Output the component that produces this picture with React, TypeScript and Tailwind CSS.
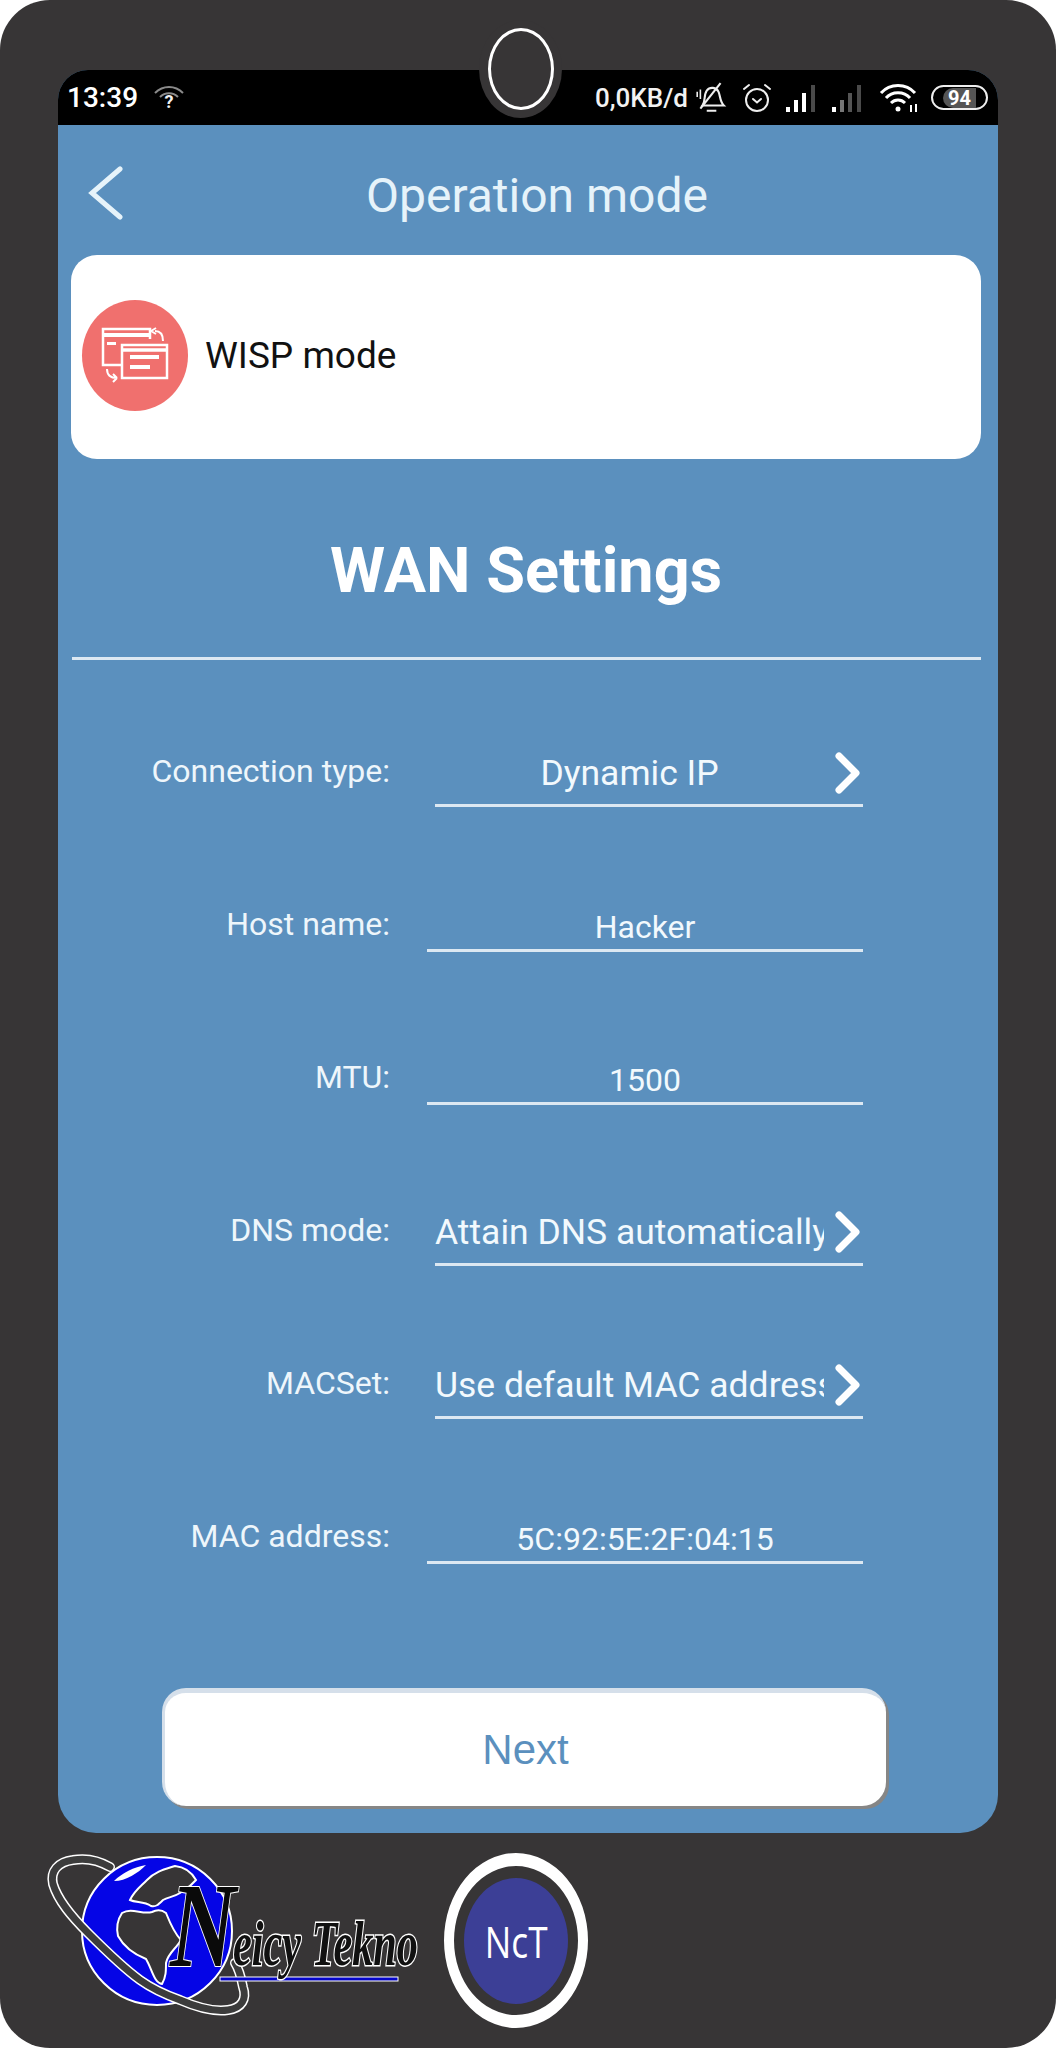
const rows = [
  { label: "Connection type:", value: "Dynamic IP", select: true },
  { label: "Host name:", value: "Hacker", select: false },
  { label: "MTU:", value: "1500", select: false },
  { label: "DNS mode:", value: "Attain DNS automatically", select: true },
  { label: "MACSet:", value: "Use default MAC address", select: true },
  { label: "MAC address:", value: "5C:92:5E:2F:04:15", select: false },
];

function WifiQuestion() {
  return (
    <svg width="32" height="26" viewBox="0 0 32 26" fill="none" className="ml-[15px]">
      <path d="M2 8 C10 0 22 0 30 8" stroke="#8a8a8a" strokeWidth="2" />
      <path d="M7 12 C12 7 20 7 25 12" stroke="#8a8a8a" strokeWidth="2" />
      <text x="16" y="23" textAnchor="middle" fontSize="18" fontWeight="700" fontFamily="Roboto, sans-serif" fill="#f2f2f2">?</text>
    </svg>
  );
}

function BellMuted() {
  return (
    <svg width="34" height="34" viewBox="0 0 32 32" fill="none" stroke="#eeeeee" strokeWidth="2">
      <path d="M8 23 C11 19 9 13 12 9 C15 5 21 6 23 10 C25 14 24 19 28 23 Z" />
      <path d="M12 28 H21" />
      <path d="M6 26 L25 2" />
      <path d="M3 10 V15 M6 8 V17" strokeWidth="1.5" />
    </svg>
  );
}

function Alarm() {
  return (
    <svg width="32" height="32" viewBox="0 0 32 32" fill="none" stroke="#eeeeee" strokeWidth="2" strokeLinecap="round">
      <circle cx="16" cy="18" r="11" />
      <path d="M12 17 L16 20.5 L20 17" />
      <path d="M3 7 L8 3 M29 7 L24 3" />
    </svg>
  );
}

function Signal({ dim }: { dim: boolean }) {
  const bars = [
    { x: 0, h: 5, c: "#ffffff" },
    { x: 8, h: 12, c: dim ? "#777777" : "#ffffff" },
    { x: 16, h: 19, c: dim ? "#555555" : "#ffffff" },
    { x: 25, h: 27, c: "#4a4a4a" },
  ];
  return (
    <svg width="36" height="28" viewBox="0 0 36 28">
      {bars.map((b) => (
        <rect key={b.x} x={b.x + 3} y={28 - b.h} width="4" height={b.h} fill={b.c} />
      ))}
    </svg>
  );
}

function WifiFull() {
  return (
    <svg width="40" height="30" viewBox="0 0 40 30" fill="none" stroke="#ffffff" strokeWidth="3">
      <path d="M2 10 C11 0 27 0 36 10" />
      <path d="M7 15 C13 8 25 8 31 15" />
      <path d="M12 20 C16 16 22 16 26 20" />
      <circle cx="19" cy="26" r="2.5" fill="#ffffff" stroke="none" />
      <path d="M32 22 V29 M37 21 V29" strokeWidth="2" />
    </svg>
  );
}

function WispIcon() {
  return (
    <svg width="68" height="56" viewBox="0 0 68 56" fill="none" stroke="#ffffff" strokeWidth="2.5">
      <path d="M40 38 H2 V2 H49 V12" fill="none" />
      <path d="M2 8 H49" strokeWidth="4" />
      <rect x="6" y="15" width="9" height="3" fill="#ffffff" stroke="none" />
      <rect x="21" y="18" width="45" height="33" fill="#f0706e" />
      <path d="M21 23 H66" strokeWidth="3.5" />
      <rect x="29" y="28" width="29" height="4" fill="#ffffff" stroke="none" />
      <rect x="29" y="38" width="20" height="4" fill="#ffffff" stroke="none" />
      <path d="M54 4 C60 4 62 8 62 14 M50 4 L55 1 M50 4 L55 7" strokeWidth="2" />
      <path d="M6 42 C6 48 10 51 16 51 M16 51 L12 47 M16 51 L12 55" strokeWidth="2" />
    </svg>
  );
}

function Chevron() {
  return (
    <svg width="26" height="42" viewBox="0 0 26 42" fill="none" stroke="#ffffff" strokeWidth="7" strokeLinecap="round" strokeLinejoin="round" className="shrink-0">
      <path d="M4 4 L21 21 L4 38" />
    </svg>
  );
}

function NeicyLogo() {
  const ring = "M110 1864 C98 1857 84 1855 73 1857 C58 1859 50 1868 53 1881 C58 1898 72 1914 88 1930 C106 1948 122 1964 140 1977 C154 1987 166 1992 180 1997 C196 2004 214 2009 228 2007 C242 2005 247 1996 243 1984 C241 1974 239 1966 235 1960";
  return (
    <svg width="390" height="170" viewBox="40 1850 390 170" fill="none" className="shrink-0 overflow-visible">
      {/* globe */}
      <ellipse cx="157" cy="1928" rx="75" ry="74" fill="#0505e6" stroke="#ffffff" strokeWidth="2" />
      {/* continents */}
      <path d="M122 1910 C132 1904 142 1912 152 1909 C158 1906 162 1907 166 1910 C170 1920 174 1930 181 1937 C176 1946 168 1950 166 1960 C166 1968 166 1974 162 1981 C154 1980 152 1966 146 1956 C136 1952 124 1944 118 1933 C116 1924 118 1916 122 1910 Z" fill="#373536" stroke="#ffffff" strokeWidth="2" />
      <path d="M130 1897 C134 1888 140 1884 147 1877 C156 1868 166 1866 175 1863 C186 1864 192 1870 196 1877 C190 1884 186 1886 180 1890 C174 1894 168 1894 163 1897 C158 1902 156 1904 151 1903 C144 1898 136 1900 130 1897 Z" fill="#373536" stroke="#ffffff" strokeWidth="2" />
      <path d="M114 1878 C122 1870 134 1864 146 1862 C138 1870 126 1878 114 1878 Z" fill="#ffffff" />
      {/* ring */}
      <path d={ring} stroke="#ffffff" strokeWidth="10" strokeLinecap="round" />
      <path d={ring} stroke="#3c3c3c" strokeWidth="7" strokeLinecap="round" />
      {/* wordmark */}
      <rect x="220" y="1974" width="178" height="4" fill="#0505c8" stroke="#ffffff" strokeWidth="1" />
      <text x="233" y="1962" textLength="185" lengthAdjust="spacingAndGlyphs" fontSize="64" fontStyle="italic" fontWeight="700" fontFamily="'Liberation Serif', serif" fill="#111111" stroke="#ffffff" strokeWidth="3" paintOrder="stroke">eicy Tekno</text>
      <text x="170" y="1963" textLength="66" lengthAdjust="spacingAndGlyphs" fontSize="120" fontStyle="italic" fontWeight="700" fontFamily="'Liberation Serif', serif" fill="#0a0a0a" stroke="#ffffff" strokeWidth="2" paintOrder="stroke">N</text>
    </svg>
  );
}

export default function App() {
  return (
    <div className="w-[1056px] h-[2048px] bg-white font-['Roboto',sans-serif]">
      <div className="relative h-full rounded-[50px] bg-[#373536] px-[58px] pt-[70px]">
        {/* camera notch */}
        <div className="absolute left-[479px] top-[20px] w-[83px] h-[98px] rounded-[50%] bg-[#373536] flex items-center justify-center">
          <div className="w-[66px] h-[82px] rounded-[50%] border-[3px] border-white" />
        </div>

        <div className="w-[940px] h-[1763px] rounded-t-[30px] rounded-b-[38px] overflow-hidden bg-[#5b90be] flex flex-col">
          <div className="h-[55px] bg-black flex items-center pl-[9px] pr-[10px] text-white shrink-0">
            <span className="text-[28px] leading-none font-medium">13:39</span>
            <WifiQuestion />
            <span className="ml-auto text-[26px] leading-none font-medium text-[#f2f2f2]">0,0KB/d</span>
            <div className="ml-[6px]"><BellMuted /></div>
            <div className="ml-[13px]"><Alarm /></div>
            <div className="ml-[10px]"><Signal dim={false} /></div>
            <div className="ml-[10px]"><Signal dim={true} /></div>
            <div className="ml-[14px]"><WifiFull /></div>
            <div className="ml-[12px] w-[57px] h-[25px] rounded-full border-2 border-[#eeeeee] flex items-center justify-center">
              <span className="text-[20px] leading-none font-bold text-white bg-[#555555] px-[5px] rounded-l-full">94</span>
            </div>
          </div>

          <div className="relative h-[130px] shrink-0 flex items-center justify-center pt-[12px]">
            <svg width="36" height="54" viewBox="0 0 36 54" fill="none" stroke="#e6f3fa" strokeWidth="5" strokeLinecap="round" className="absolute left-[30px] top-[41px]">
              <path d="M32 3 L4 27 L32 51" />
            </svg>
            <h1 className="text-[48px] leading-none text-[#e6f3fa] ml-[18px]">Operation mode</h1>
          </div>

          <div className="ml-[13px] mr-[17px] h-[204px] shrink-0 rounded-[26px] bg-white flex items-center pl-[11px] pb-[4px]">
            <div className="w-[106px] h-[111px] rounded-[50%] bg-[#f0706e] flex items-center justify-center">
              <WispIcon />
            </div>
            <span className="ml-[17px] text-[37px] leading-none text-[#111111]">WISP mode</span>
          </div>

          <div className="ml-[14px] mr-[17px] h-[201px] shrink-0 flex flex-col border-b-[3px] border-[#dce8f2]">
            <h2 className="mt-[84px] text-center text-[63px] leading-[56px] font-bold text-white ml-[-1px]">WAN Settings</h2>
          </div>

          <div className="mt-[92px] flex flex-col">
            {rows.map((row) => (
              <div key={row.label} className="h-[153px] flex items-start">
                <div className="w-[332px] shrink-0 text-right text-[32px] leading-[38px] text-[#eef6fb]">{row.label}</div>
                {row.select ? (
                  <div className="ml-[45px] w-[428px] h-[55px] border-b-[3px] border-[#dce8f2] flex items-start">
                    <div className="w-[389px] overflow-hidden whitespace-nowrap text-center text-[35.5px] leading-[43px] text-[#f2f9fd]">{row.value}</div>
                    <div className="ml-[11px]"><Chevron /></div>
                  </div>
                ) : (
                  <div className="ml-[37px] w-[436px] h-[47px] border-b-[3px] border-[#dce8f2] pt-[2px] text-center text-[32px] leading-[40px] text-[#f2f9fd]">{row.value}</div>
                )}
              </div>
            ))}
          </div>

          <button className="ml-[104px] mt-[18px] w-[724px] h-[118px] shrink-0 rounded-[24px] bg-white border-t-[5px] border-l-[3px] border-[#d5dfea] shadow-[3px_3px_0_#868686] text-[42px] leading-none text-[#5b90be] font-['Liberation_Sans',sans-serif]">
            Next
          </button>
        </div>

        <div className="flex items-start mt-[20px] ml-[-18px]">
          <NeicyLogo />
          <div className="ml-[14px] w-[144px] h-[175px] rounded-[50%] border-x-[10px] border-y-[13px] border-white flex items-center justify-center">
            <div className="w-[104px] h-[126px] rounded-[50%] bg-[#3c3f96] flex items-center justify-center">
              <span className="text-[44px] leading-none text-white font-['Open_Sans',sans-serif] scale-x-[0.8]">NcT</span>
            </div>
          </div>
        </div>
      </div>
    </div>
  );
}
